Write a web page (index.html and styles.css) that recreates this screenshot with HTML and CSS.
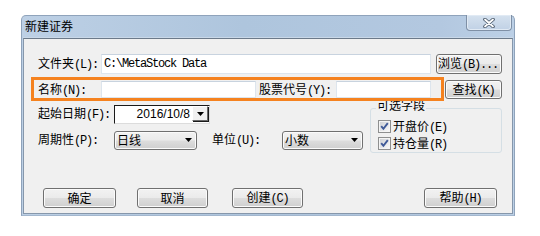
FILE: index.html
```html
<!DOCTYPE html>
<html lang="zh">
<head>
<meta charset="utf-8">
<title>新建证券</title>
<link rel="stylesheet" href="styles.css">
</head>
<body>
<div class="dlg">
  <div class="titlebar">
    <span class="title">新建证券</span>
    <div class="close">
      <svg width="14" height="10" viewBox="0 0 14 10">
        <path d="M3 1.5 L11 8.5 M11 1.5 L3 8.5" stroke="#4b5a6c" stroke-width="3.6" stroke-linecap="round" fill="none"/>
        <path d="M3 1.5 L11 8.5 M11 1.5 L3 8.5" stroke="#ffffff" stroke-width="1.8" stroke-linecap="round" fill="none"/>
      </svg>
    </div>
  </div>
  <div class="frame">
    <div class="client">
      <div class="row r1">
        <span class="lbl l63">文件夹<span class="k">(L):</span></span>
        <div class="tb folder"><span class="mono">C:\MetaStock Data</span></div>
        <button class="btn browse">浏览<span class="k">(B)...</span></button>
      </div>
      <div class="row r2">
        <span class="lbl l63">名称<span class="k">(N):</span></span>
        <div class="tb name"></div>
        <span class="lbl code">股票代号<span class="k">(Y):</span></span>
        <div class="tb codein"></div>
        <button class="btn find">查找<span class="k">(K)</span></button>
      </div>
      <div class="mid">
        <div class="left">
          <div class="row r3">
            <span class="lbl l76">起始日期<span class="k">(F):</span></span>
            <div class="dp">
              <span class="val">2016/10/8</span>
              <span class="drop">
                <svg width="7" height="4" viewBox="0 0 7 4"><path d="M0 0 H7 L3.5 4 Z" fill="#000"/></svg>
              </span>
            </div>
          </div>
          <div class="row r4">
            <span class="lbl l76">周期性<span class="k">(P):</span></span>
            <div class="cb period">
              <span>日线</span>
              <svg width="7" height="4" viewBox="0 0 7 4"><path d="M0 0 H7 L3.5 4 Z" fill="#000"/></svg>
            </div>
            <span class="lbl unit">单位<span class="k">(U):</span></span>
            <div class="cb unitcb">
              <span>小数</span>
              <svg width="7" height="4" viewBox="0 0 7 4"><path d="M0 0 H7 L3.5 4 Z" fill="#000"/></svg>
            </div>
          </div>
        </div>
        <div class="group">
          <span class="gtitle">可选字段</span>
          <div class="chk first">
            <svg class="box" width="13" height="13" viewBox="0 0 13 13">
              <defs>
                <linearGradient id="g1" x1="0" y1="0" x2="1" y2="1">
                  <stop offset="0" stop-color="#cfd2d6"/>
                  <stop offset="1" stop-color="#f7f7f7"/>
                </linearGradient>
              </defs>
              <rect x="0.5" y="0.5" width="12" height="12" fill="#f4f4f4" stroke="#8e8f8f"/>
              <rect x="2" y="2" width="9" height="9" fill="url(#g1)"/>
              <path d="M3.2 6.2 L5.4 8.8 L9.8 3.2" stroke="#3f5a98" stroke-width="1.9" fill="none"/>
            </svg>
            <span>开盘价<span class="k">(E)</span></span>
          </div>
          <div class="chk">
            <svg class="box" width="13" height="13" viewBox="0 0 13 13">
              <rect x="0.5" y="0.5" width="12" height="12" fill="#f4f4f4" stroke="#8e8f8f"/>
              <rect x="2" y="2" width="9" height="9" fill="url(#g1)"/>
              <path d="M3.2 6.2 L5.4 8.8 L9.8 3.2" stroke="#3f5a98" stroke-width="1.9" fill="none"/>
            </svg>
            <span>持仓量<span class="k">(R)</span></span>
          </div>
        </div>
      </div>
      <div class="row btns">
        <button class="btn big ok">确定</button>
        <button class="btn big cancel">取消</button>
        <button class="btn big create">创建<span class="k">(C)</span></button>
        <button class="btn big help">帮助<span class="k">(H)</span></button>
      </div>
      <div class="hl"></div>
    </div>
  </div>
</div>
</body>
</html>
```

FILE: styles.css
```css
html, body {
  margin: 0;
  padding: 0;
  background: #ffffff;
}

body {
  font-family: "Noto Sans CJK SC", "Liberation Sans", sans-serif;
  font-size: 12px;
  line-height: 14px;
  color: #000;
}

.dlg {
  position: relative;
  margin: 15px 0 0 21px;
  width: 494px;
  box-sizing: border-box;
  border: 1px solid #8fa3bb;
  border-bottom-color: #a3b7ce;
  border-radius: 5px 5px 0 0;
  background: linear-gradient(to right, #bdd0e5, #aec5dd 45%, #b3c8e0 85%, #bcd0e6);
  padding: 0 1px 1px 1px;
}

.titlebar {
  height: 22px;
  display: flex;
  align-items: center;
  padding-left: 2px;
  box-shadow: inset 0 -1px 0 #c9d8e8;
}

.title {
  margin-top: -2px;
  font-size: 12px;
}

.close {
  position: absolute;
  top: -1px;
  right: 2px;
  width: 46px;
  height: 16px;
  box-sizing: border-box;
  border: 1px solid #7f90a6;
  border-top: none;
  border-radius: 0 0 4px 4px;
  background: linear-gradient(#d6e2ef, #c0d1e5);
  box-shadow: inset 0 0 0 1px #e1eaf4;
  display: flex;
  align-items: center;
  justify-content: center;
}

.frame {
  border: 1px solid #8697ab;
  border-top-color: #6c7a8a;
}

.client {
  position: relative;
  height: 174px;
  box-sizing: border-box;
  background: #f0f0f0;
  padding: 15px 10px 0 14px;
}

.row {
  display: flex;
  align-items: center;
}

.lbl {
  white-space: nowrap;
  flex: none;
}

.k {
  font-family: "Liberation Mono", monospace;
  font-size: 12px;
  letter-spacing: -1.2px;
}

.mono {
  font-family: "Liberation Mono", monospace;
  font-size: 12px;
  letter-spacing: -1.2px;
}

.l63 { width: 63px; }
.l76 { width: 76px; }

.tb {
  box-sizing: border-box;
  background: #ffffff;
  border: 1px solid #dde5ed;
  border-top-color: #c8d3df;
  display: flex;
  align-items: center;
  padding-left: 2px;
  flex: none;
}

.r1 { height: 20px; }
.r1 .folder { width: 330px; height: 20px; }
.r1 .browse { margin-left: 5px; width: 66px; height: 20px; text-align: left; padding-left: 1px; }

.r2 { height: 19px; margin-top: 6px; }
.r2 .name { width: 155px; height: 17px; }
.r2 .code { margin-left: 3px; width: 77px; }
.r2 .codein { width: 95px; height: 17px; }
.r2 .find { margin-left: 14px; width: 57px; height: 19px; }

.btn {
  box-sizing: border-box;
  border: 1px solid #707070;
  border-radius: 3px;
  background: linear-gradient(#f2f2f2 0%, #ebebeb 48%, #dddddd 52%, #cfcfcf 100%);
  box-shadow: inset 0 0 0 1px #fbfbfb;
  font-family: "Noto Sans CJK SC", "Liberation Sans", sans-serif;
  font-size: 12px;
  line-height: 14px;
  color: #000;
  padding: 0;
  white-space: nowrap;
  flex: none;
}

.mid {
  display: flex;
  margin-top: 5px;
}

.left {
  width: 325px;
}

.r3 { height: 20px; }

.dp {
  width: 96px;
  height: 19px;
  box-sizing: border-box;
  background: #ffffff;
  border-top: 1px solid #1a1a1a;
  border-left: 1px solid #1a1a1a;
  border-right: 1px solid #dcdcdc;
  border-bottom: 1px solid #dcdcdc;
  display: flex;
  align-items: center;
  justify-content: flex-end;
  padding-right: 1px;
}

.dp .val {
  font-family: "Liberation Sans", sans-serif;
  font-size: 12px;
  margin-right: 2px;
}

.dp .drop {
  width: 16px;
  height: 15px;
  box-sizing: border-box;
  background: #f0f0f0;
  border-top: 1px solid #ffffff;
  border-left: 1px solid #ffffff;
  border-right: 1px solid #6a6a6a;
  border-bottom: 1px solid #6a6a6a;
  box-shadow: 1px 1px 0 #1a1a1a;
  display: flex;
  align-items: center;
  justify-content: center;
  margin-top: -1px;
}

.r4 { height: 20px; margin-top: 6px; }

.cb {
  height: 19px;
  box-sizing: border-box;
  border: 1px solid #707070;
  border-radius: 3px;
  background: linear-gradient(#f2f2f2 0%, #ebebeb 48%, #dddddd 52%, #cfcfcf 100%);
  box-shadow: inset 0 0 0 1px #fbfbfb;
  display: flex;
  align-items: center;
  justify-content: space-between;
  padding: 0 4px 0 2px;
  flex: none;
}

.period { width: 83px; }
.unit { margin-left: 15px; width: 70px; }
.unitcb { width: 81px; }

.group {
  margin-left: 7px;
  margin-top: 4px;
  width: 132px;
  height: 45px;
  box-sizing: border-box;
  border: 1px solid #d5dfe5;
  border-radius: 3px;
  padding-left: 7px;
}

.gtitle {
  display: block;
  width: fit-content;
  margin: -11px 0 0 -2px;
  padding: 0 1px;
  background: #f0f0f0;
}

.chk {
  height: 17px;
  display: flex;
  align-items: center;
}

.chk.first { margin-top: 6px; }

.chk .box {
  flex: none;
  margin-right: 2px;
}

.btns {
  margin-top: 35px;
  height: 20px;
}

.big { height: 20px; }
.ok { margin-left: 5px; width: 73px; }
.cancel { margin-left: 21px; width: 71px; }
.create { margin-left: 24px; width: 71px; }
.help { margin-left: auto; margin-right: 5px; width: 73px; }

.hl {
  position: absolute;
  left: 7px;
  top: 38px;
  width: 413px;
  height: 24px;
  box-sizing: border-box;
  border: 3px solid #f5821f;
  pointer-events: none;
}
```
